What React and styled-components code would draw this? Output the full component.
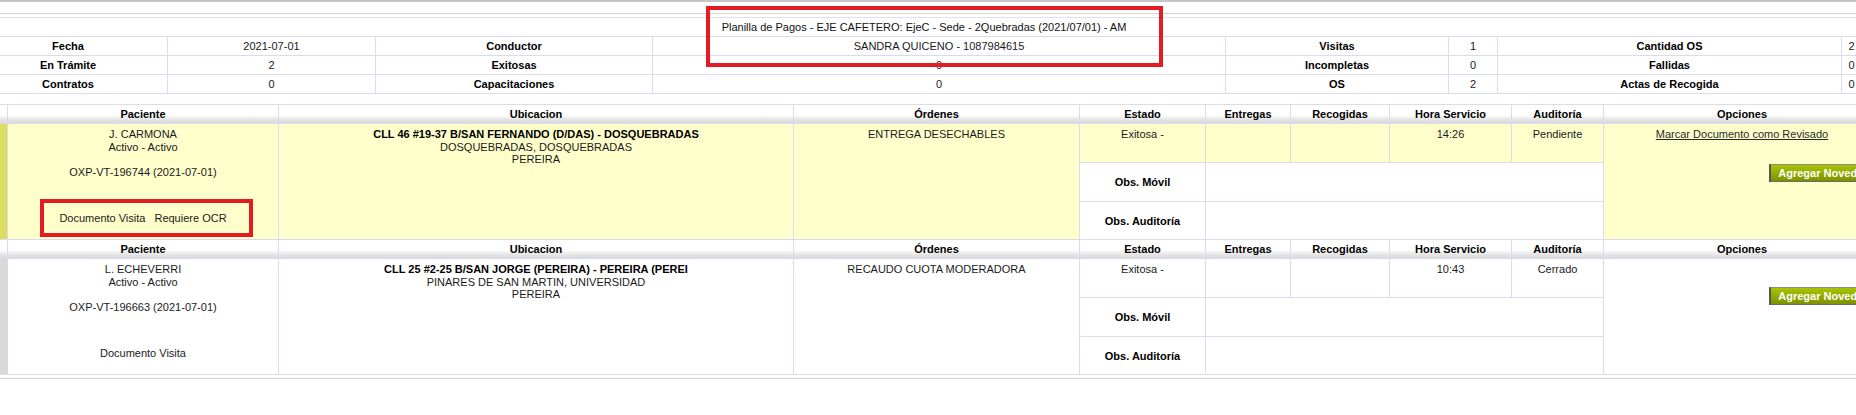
import React from "react";
import styled, { createGlobalStyle } from "styled-components";

const Global = createGlobalStyle`
  html, body { margin: 0; padding: 0; background: #fff; overflow: hidden; }
  #root { width: 1856px; height: 415px; overflow: hidden; }
`;

const LINE = "#dadaf2";

const Screen = styled.div`
  position: relative;
  width: 1856px;
  height: 415px;
  overflow: hidden;
  background: #fff;
`;

const Page = styled.div`
  margin-left: -32px;
  width: 1912px;
  font-family: "Liberation Sans", Arial, sans-serif;
  font-size: 11px;
  color: #1a1a1a;
`;

const TopEdge = styled.div`
  height: 11px;
  border-top: 2px solid #c6c6c6;
  border-bottom: 1px solid #d6d6d6;
`;

const TitleBar = styled.div`
  margin-top: 3px;
  border-top: 1px solid #e0e0f4;
  height: 18px;
  line-height: 18px;
  text-align: center;
  color: #111;
`;

const Summary = styled.div`
  display: grid;
  width: 1894px;
  grid-template-columns: 198px 207px 276px 572px 222px 48px 343px 19px;
  grid-auto-rows: 18px;
  gap: 1px;
  padding: 1px;
  box-sizing: border-box;
  background: ${LINE};
`;

const SumCell = styled.div`
  background: #fff;
  text-align: center;
  line-height: 18px;
  white-space: nowrap;
  overflow: hidden;
  font-weight: ${(p) => (p.$bold ? "bold" : "normal")};
  color: ${(p) => (p.$bold ? "#000" : "#1a1a1a")};
`;

const Detail = styled.div`
  margin-top: 10px;
  display: flex;
  flex-direction: column;
  gap: 1px;
  padding: 1px 0;
  background: ${LINE};
`;

const Block = styled.div`
  display: grid;
  grid-template-columns: 39px 270px 514px 285px 125px 84px 98px 121px 91px 276px;
  grid-template-rows: 18px 38px 38px 37px;
  gap: 1px;
`;

const HeadCell = styled.div`
  background: linear-gradient(to bottom, #ffffff 0%, #ffffff 55%, #e6e6e6 80%, #d9d9d9 100%);
  font-weight: bold;
  color: #000;
  text-align: center;
  line-height: 18px;
  white-space: nowrap;
  overflow: hidden;
`;

const Strip = styled.div`
  grid-row: span 3;
  background: ${(p) => (p.$active ? "#dcdc5e" : "#d9d9d9")};
`;

const Cell = styled.div`
  grid-row: ${(p) => (p.$tall ? "span 3" : "auto")};
  grid-column: ${(p) => (p.$wide ? "span 4" : "auto")};
  background: ${(p) => (p.$yellow ? "#ffffcc" : "#fff")};
  padding: 4px 2px 0;
  line-height: 12.5px;
  text-align: center;
  white-space: nowrap;
  overflow: hidden;
`;

const PatientCell = styled(Cell)`
  display: flex;
  flex-direction: column;
  align-items: center;
`;

const Line = styled.div`
  font-weight: ${(p) => (p.$bold ? "bold" : "normal")};
  color: ${(p) => (p.$bold ? "#000" : "#1a1a1a")};
  min-height: 12.5px;
`;

const DocLine = styled.div`
  margin-top: 34px;
  display: flex;
  gap: 9px;
  justify-content: center;
`;

const ObsLabel = styled.div`
  background: #fff;
  font-weight: bold;
  color: #000;
  display: flex;
  align-items: center;
  justify-content: center;
  white-space: nowrap;
`;

const OptionsCell = styled(Cell)`
  display: flex;
  flex-direction: column;
  align-items: center;
`;

const LinkText = styled.a`
  color: #2a2a2a;
  text-decoration: underline;
  cursor: pointer;
`;

const ButtonRow = styled.div`
  align-self: stretch;
  display: flex;
  justify-content: flex-end;
  margin-top: ${(p) => p.$top}px;
  padding-right: 1px;
`;

const NovedadButton = styled.button`
  height: 18px;
  box-sizing: border-box;
  padding: 0 6px 0 7px;
  font-family: "Liberation Sans", Arial, sans-serif;
  font-size: 11px;
  font-weight: bold;
  color: #fff;
  line-height: 14px;
  border: 1px solid #6a6a6a;
  border-left: 2px solid #555;
  border-top-color: #8a8a8a;
  background: linear-gradient(to bottom, #a9c400 0%, #93ab00 50%, #7d9200 100%);
  cursor: pointer;
  white-space: nowrap;
`;

const BottomRule = styled.div`
  margin-top: 3px;
  border-top: 1px solid #d8d8d8;
`;

const Highlight = styled.div`
  position: absolute;
  box-sizing: border-box;
  border: 4px solid #e41b23;
  pointer-events: none;
`;

const headers = [
  "",
  "Paciente",
  "Ubicacion",
  "Órdenes",
  "Estado",
  "Entregas",
  "Recogidas",
  "Hora Servicio",
  "Auditoría",
  "Opciones",
];

const summaryRows = [
  ["Fecha", "2021-07-01", "Conductor", "SANDRA QUICENO - 1087984615", "Visitas", "1", "Cantidad OS", "2"],
  ["En Trámite", "2", "Exitosas", "0", "Incompletas", "0", "Fallidas", "0"],
  ["Contratos", "0", "Capacitaciones", "0", "OS", "2", "Actas de Recogida", "0"],
];

const visits = [
  {
    active: true,
    name: "J. CARMONA",
    state: "Activo - Activo",
    code: "OXP-VT-196744 (2021-07-01)",
    docs: ["Documento Visita", "Requiere OCR"],
    address: "CLL 46 #19-37 B/SAN FERNANDO (D/DAS) - DOSQUEBRADAS",
    zone: "DOSQUEBRADAS, DOSQUEBRADAS",
    city: "PEREIRA",
    order: "ENTREGA DESECHABLES",
    status: "Exitosa -",
    hour: "14:26",
    audit: "Pendiente",
    link: "Marcar Documento como Revisado",
    btnTop: 23,
  },
  {
    active: false,
    name: "L. ECHEVERRI",
    state: "Activo - Activo",
    code: "OXP-VT-196663 (2021-07-01)",
    docs: ["Documento Visita"],
    address: "CLL 25 #2-25 B/SAN JORGE (PEREIRA) - PEREIRA (PEREI",
    zone: "PINARES DE SAN MARTIN, UNIVERSIDAD",
    city: "PEREIRA",
    order: "RECAUDO CUOTA MODERADORA",
    status: "Exitosa -",
    hour: "10:43",
    audit: "Cerrado",
    link: null,
    btnTop: 24,
  },
];

function VisitBlock({ v }) {
  const y = v.active;
  return (
    <Block>
      {headers.map((h, i) => (
        <HeadCell key={i}>{h}</HeadCell>
      ))}
      <Strip $active={y} />
      <PatientCell $tall $yellow={y}>
        <Line>{v.name}</Line>
        <Line>{v.state}</Line>
        <Line />
        <Line>{v.code}</Line>
        <DocLine>
          {v.docs.map((d) => (
            <span key={d}>{d}</span>
          ))}
        </DocLine>
      </PatientCell>
      <Cell $tall $yellow={y}>
        <Line $bold>{v.address}</Line>
        <Line>{v.zone}</Line>
        <Line>{v.city}</Line>
      </Cell>
      <Cell $tall $yellow={y}>
        <Line>{v.order}</Line>
      </Cell>
      <Cell $yellow={y}>{v.status}</Cell>
      <Cell $yellow={y} />
      <Cell $yellow={y} />
      <Cell $yellow={y}>{v.hour}</Cell>
      <Cell $yellow={y}>{v.audit}</Cell>
      <OptionsCell $tall $yellow={y}>
        {v.link && <LinkText>{v.link}</LinkText>}
        <ButtonRow $top={v.btnTop}>
          <NovedadButton type="button">Agregar Novedad</NovedadButton>
        </ButtonRow>
      </OptionsCell>
      <ObsLabel>Obs. Móvil</ObsLabel>
      <Cell $wide />
      <ObsLabel>Obs. Auditoría</ObsLabel>
      <Cell $wide />
    </Block>
  );
}

export default function App() {
  return (
    <Screen>
      <Global />
      <Page>
        <TopEdge />
        <TitleBar>Planilla de Pagos - EJE CAFETERO: EjeC - Sede - 2Quebradas (2021/07/01) - AM</TitleBar>
        <Summary>
          {summaryRows.map((row, r) =>
            row.map((t, c) => (
              <SumCell key={`${r}-${c}`} $bold={c % 2 === 0}>
                {t}
              </SumCell>
            ))
          )}
        </Summary>
        <Detail>
          {visits.map((v) => (
            <VisitBlock key={v.code} v={v} />
          ))}
        </Detail>
        <BottomRule />
      </Page>
      <Highlight style={{ left: 706, top: 6, width: 457, height: 61 }} />
      <Highlight style={{ left: 40, top: 199, width: 213, height: 38 }} />
    </Screen>
  );
}
